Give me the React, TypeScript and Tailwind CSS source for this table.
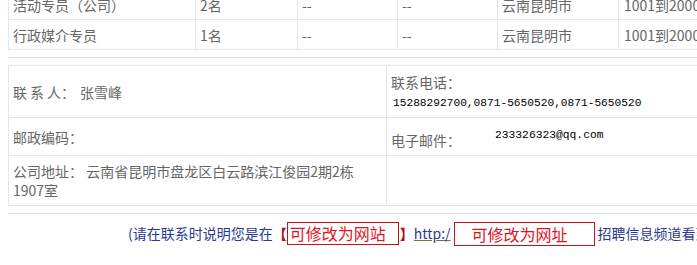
import React from "react";

const cjk = "font-['Noto_Sans_CJK_SC','Noto_Sans',sans-serif]";
const mono = "font-['Liberation_Mono','DejaVu_Sans_Mono',monospace]";

const jobs = [
    { name: "活动专员（公司）", count: "2名", place: "云南昆明市", pay: "1001到2000" },
    { name: "行政媒介专员", count: "1名", place: "云南昆明市", pay: "1001到2000" },
];

const JobRow = ({ job }: { job: (typeof jobs)[number] }) => (
    <div className="flex h-[30px] items-center border-b border-[#e3e7eb]">
        <div className="flex h-full w-[187px] items-center border-l border-[#e3e7eb] pl-[4px]">{job.name}</div>
        <div className="flex h-full w-[102px] items-center border-l border-[#e3e7eb] pl-[4px]">{job.count}</div>
        <div className="flex h-full w-[100px] items-center border-l border-[#e3e7eb] pl-[4px]">--</div>
        <div className="flex h-full w-[100px] items-center border-l border-[#e3e7eb] pl-[4px]">--</div>
        <div className="flex h-full w-[121px] items-center border-l border-[#e3e7eb] pl-[4px]">{job.place}</div>
        <div className="flex h-full flex-1 items-center border-l border-[#e3e7eb] pl-[5px]">{job.pay}</div>
    </div>
);

export default function App() {
    return (
        <div className={`h-[265px] w-[697px] overflow-hidden bg-white text-[14px] leading-[20px] text-[#666] ${cjk}`}>
            <div className="ml-[8px] w-[780px]">
                {/* job list, first row scrolled off the top */}
                <div className="-mt-[10px]">
                    {jobs.map((job) => (
                        <JobRow key={job.name} job={job} />
                    ))}
                </div>

                <div className="mt-[7px] h-px w-full bg-[#e0e0e0]"></div>

                {/* contact box */}
                <div className="mt-[7px] border-t border-l border-[#e3e7eb]">
                    <div className="flex h-[52px] border-b border-[#e3e7eb]">
                        <div className="flex w-[378px] items-center border-r border-[#e3e7eb] pl-[4px]">
                            <span>联</span>
                            <span className="ml-[3px]">系</span>
                            <span className="ml-[3px]">人</span>
                            <span>：</span>
                            <span className="ml-[5px]">张雪峰</span>
                        </div>
                        <div className="flex flex-1 flex-col justify-center pl-[4px]">
                            <span className="leading-[22px]">联系电话：</span>
                            <span className={`pl-[2px] text-[11.2px] leading-[20px] text-black ${mono}`}>
                                15288292700,0871-5650520,0871-5650520
                            </span>
                        </div>
                    </div>
                    <div className="flex h-[38px] border-b border-[#e3e7eb]">
                        <div className="flex w-[378px] items-center border-r border-[#e3e7eb] pl-[4px]">
                            邮政编码：
                        </div>
                        <div className="flex flex-1 items-center pl-[4px]">
                            <span className="mt-[6px]">电子邮件：</span>
                            <span className={`mb-[4px] ml-[34px] text-[11.3px] text-black ${mono}`}>233326323@qq.com</span>
                        </div>
                    </div>
                    <div className="flex h-[50px] border-b border-[#e3e7eb]">
                        <div className="flex w-[378px] items-center border-r border-[#e3e7eb] pl-[4px] leading-[19px]">
                            <p>
                                公司地址： 云南省昆明市盘龙区白云路滨江俊园2期2栋
                                <br />
                                1907室
                            </p>
                        </div>
                        <div className="flex-1"></div>
                    </div>
                </div>

                <div className="mt-[7px] h-px w-full bg-[#e0e0e0]"></div>

                {/* source note */}
                <div className="flex items-center whitespace-nowrap pt-[6px] pl-[120px] text-[#2b3990]">
                    <span>(请在联系时说明您是在</span>
                    <span className="font-bold text-[#b01010]">【</span>
                    <span className="flex h-[23px] w-[112px] items-center border border-[#c4121a] bg-white pl-[2px] text-[16px] text-[#e0141e]">
                        可修改为网站
                    </span>
                    <span className="ml-[1px] font-bold text-[#b01010]">】</span>
                    <span className="underline decoration-[#6b7a3a]">http:/</span>
                    <span className="mt-[2px] ml-[3px] flex h-[24px] w-[141px] items-center border border-[#c4121a] bg-white pl-[17px] text-[16px] text-[#e0141e]">
                        可修改为网址
                    </span>
                    <span className="ml-[3px]">招聘信息频道看到的，谢谢！)</span>
                </div>
            </div>
        </div>
    );
}
